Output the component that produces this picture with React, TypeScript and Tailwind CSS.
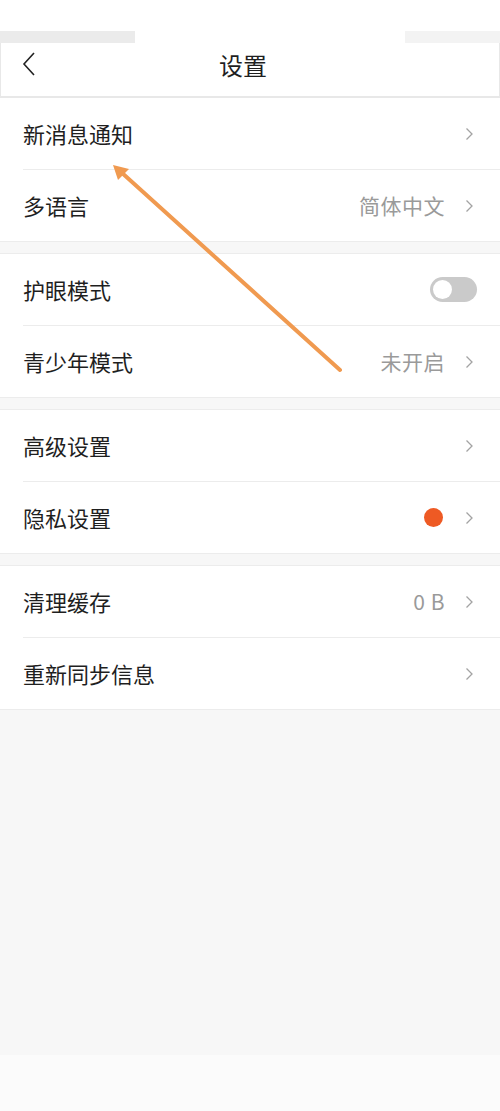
import React from 'react';

type Row = {
  label: string;
  value?: string;
  toggle?: boolean;
  dot?: boolean;
  chevron?: boolean;
};

const GROUPS: Row[][] = [
  [
    { label: '新消息通知', chevron: true },
    { label: '多语言', value: '简体中文', chevron: true },
  ],
  [
    { label: '护眼模式', toggle: true },
    { label: '青少年模式', value: '未开启', chevron: true },
  ],
  [
    { label: '高级设置', chevron: true },
    { label: '隐私设置', dot: true, chevron: true },
  ],
  [
    { label: '清理缓存', value: '0 B', chevron: true },
    { label: '重新同步信息', chevron: true },
  ],
];

const Chevron = () => (
  <svg width="9" height="14" viewBox="0 0 9 14" className="ml-[20px]">
    <path d="M1.5 1.5 L7 7 L1.5 12.5" fill="none" stroke="#a3a3a3" strokeWidth="1.3" />
  </svg>
);

const SettingRow = ({ row, last }: { row: Row; last: boolean }) => (
  <div className="pl-[23px] bg-white">
    <div
      className={`h-[71px] box-content flex items-center justify-between pr-[26px] ${last ? '' : 'border-b border-[#ececec]'}`}
    >
      <span className="text-[22px] text-[#1f1f1f]">{row.label}</span>
      <div className="flex items-center">
        {row.value && <span className="text-[21px] text-[#9a9a9a] tracking-[0.5px]">{row.value}</span>}
        {row.dot && <span className="w-[19px] h-[19px] rounded-full bg-[#ee5a24] mr-[2px]" />}
        {row.toggle && (
          <div className="w-[47px] h-[25px] rounded-full bg-[#cacaca] flex items-center px-[3px] -mr-[3px]">
            <div className="w-[19px] h-[19px] rounded-full bg-white" />
          </div>
        )}
        {row.chevron && <Chevron />}
      </div>
    </div>
  </div>
);

export default function App() {
  return (
    <div
      className="relative w-[500px] h-[1111px] bg-[#f7f7f7] flex flex-col overflow-hidden"
      style={{ fontFamily: '"Noto Sans CJK SC", "Noto Sans", sans-serif' }}
    >
      <div className="h-[31px] bg-white shrink-0" />
      <div className="h-[12px] flex shrink-0">
        <div className="w-[135px] bg-[#ebebeb]" />
        <div className="flex-1 bg-white" />
        <div className="w-[95px] bg-[#f3f3f3]" />
      </div>
      <header className="h-[55px] bg-white border-x border-b-2 border-[#e8e8e8] flex items-center relative shrink-0 pb-[12px]">
        <svg width="16" height="26" viewBox="0 0 16 26" className="ml-[20px]">
          <path d="M13 2 L3 13 L13 24" fill="none" stroke="#222" strokeWidth="1.6" />
        </svg>
        <h1 className="absolute left-0 right-0 top-0 bottom-[10px] flex items-center justify-center pr-[14px] text-[24px] text-[#1f1f1f] pointer-events-none">
          设置
        </h1>
      </header>

      <div className="flex flex-col">
        {GROUPS.map((group, gi) => (
          <div key={gi} className={gi > 0 ? 'mt-[11px] border-t border-[#ececec]' : ''}>
            <div className="border-b border-[#ececec]">
              {group.map((row, ri) => (
                <SettingRow key={row.label} row={row} last={ri === group.length - 1} />
              ))}
            </div>
          </div>
        ))}
      </div>

      <div className="flex-1" />
      <div className="h-[56px] bg-[#fbfbfb] shrink-0" />

      <svg className="absolute left-0 top-0 pointer-events-none" width="500" height="1111">
        <line x1="340" y1="370" x2="121" y2="172" stroke="#f09a50" strokeWidth="4" strokeLinecap="round" />
        <polygon points="113,165 129,169 118,180" fill="#f09a50" />
      </svg>
    </div>
  );
}
